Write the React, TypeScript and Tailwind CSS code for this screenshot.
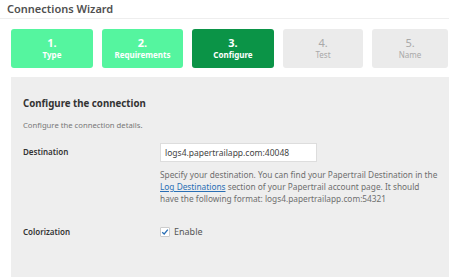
const steps = [
  { n: "1.", label: "Type", state: "done", w: "w-[82px]" },
  { n: "2.", label: "Requirements", state: "done", w: "w-[81px]" },
  { n: "3.", label: "Configure", state: "active", w: "w-[82px]" },
  { n: "4.", label: "Test", state: "todo", w: "w-[80px]" },
  { n: "5.", label: "Name", state: "todo", w: "w-[76px]" },
];

const stateClass: Record<string, string> = {
  done: "bg-[#55f59f] text-white",
  active: "bg-[#0b9447] text-white",
  todo: "bg-[#ebebeb] text-[#a9a9a9] font-normal",
};

export default function App() {
  return (
    <div className="w-[449px] h-[277px] overflow-hidden bg-white font-['Noto_Sans',sans-serif]">
      <div className="h-[19px] border-b border-[#eeeeee] pl-[7px] text-[11px] leading-[17px] font-semibold text-[#505050]">
        Connections Wizard
      </div>

      {/* Wizard steps */}
      <div className="flex gap-[9px] pl-[11px] pt-[10px]">
        {steps.map((s) => (
          <div
            key={s.n}
            className={`${s.w} h-[39px] shrink-0 rounded-[3px] flex flex-col items-center justify-center ${stateClass[s.state]}`}
          >
            <div className={`text-[11px] leading-[12px] ${s.state === "todo" ? "font-normal" : "font-bold"}`}>{s.n}</div>
            <div className={`text-[8px] leading-[11px] ${s.state === "todo" ? "font-normal" : "font-bold"}`}>{s.label}</div>
          </div>
        ))}
      </div>

      {/* Form panel */}
      <div className="ml-[11px] mt-[9px] h-[200px] bg-[#eeeeee] pl-[12px] pt-[19px]">
        <div className="text-[9.7px] leading-[16px] font-bold text-[#333333]">Configure the connection</div>
        <div className="mt-[8px] text-[7.7px] leading-[11px] text-[#777777]">Configure the connection details.</div>

        <div className="mt-[12px] flex">
          <div className="w-[137px] pt-[3px] text-[8px] leading-[12px] font-semibold text-[#333333]">Destination</div>
          <div className="w-[280px]">
            <div className="w-[157px] h-[19px] bg-white border border-[#dddddd] px-[4px] text-[8.5px] leading-[17px] text-[#444444]">
              logs4.papertrailapp.com:40048
            </div>
            <div className="mt-[7px] text-[8.3px] leading-[12px] text-[#6f6f6f]">
              <div>Specify your destination. You can find your Papertrail Destination in the</div>
              <div>
                <a className="text-[#2a6fb5] underline">Log Destinations</a> section of your Papertrail account page. It should
              </div>
              <div>have the following format: logs4.papertrailapp.com:54321</div>
            </div>
          </div>
        </div>

        <div className="mt-[20px] flex items-center">
          <div className="w-[137px] text-[8px] leading-[12px] font-semibold text-[#333333]">Colorization</div>
          <label className="flex items-center gap-[4px] text-[9px] text-[#555555]">
            <span className="w-[10px] h-[10px] bg-white border border-[#cccccc] rounded-[1px] flex items-center justify-center">
              <svg viewBox="0 0 10 10" className="w-[8px] h-[8px]">
                <path d="M1.5 5.2 L4 7.5 L8.5 2" fill="none" stroke="#2a6fb5" strokeWidth="1.6" />
              </svg>
            </span>
            Enable
          </label>
        </div>
      </div>
    </div>
  );
}
